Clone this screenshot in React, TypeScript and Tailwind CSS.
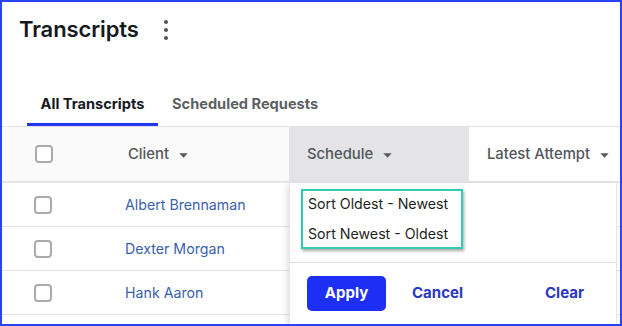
import React from 'react';

const rows = ['Albert Brennaman', 'Dexter Morgan', 'Hank Aaron', ''];

function Caret() {
  return (
    <svg width="9" height="5" viewBox="0 0 9 5" className="ml-[10px] mt-[2px]">
      <path d="M0.3 0.3h8.4L4.5 4.8z" fill="#555a60" />
    </svg>
  );
}

function Checkbox() {
  return <div className="w-[18px] h-[18px] rounded-[4px] border-2 border-[#ababab] bg-white" />;
}

export default function App() {
  return (
    <div
      className="w-[622px] h-[326px] border-2 border-[#2b44f2] bg-white relative overflow-hidden"
      style={{ fontFamily: 'Inter, "Noto Sans", sans-serif' }}
    >
      <div className="flex items-center pl-[17px] pb-[2px] h-[56px]">
        <h1 className="text-[22px] font-semibold text-[#15191e] tracking-[-0.1px]">Transcripts</h1>
        <div className="ml-[25px] flex flex-col gap-[4px] mt-[1px]">
          <span className="w-[4px] h-[4px] rounded-full bg-[#505358]" />
          <span className="w-[4px] h-[4px] rounded-full bg-[#505358]" />
          <span className="w-[4px] h-[4px] rounded-full bg-[#505358]" />
        </div>
      </div>

      <div className="flex mt-[22px] pl-[25px] border-b border-[#e3e3e3] text-[14.6px] font-bold">
        <div className="w-[131px] h-[46px] flex items-center justify-center text-[#15191e] border-b-[3px] border-[#2236f0] pt-[7px]">
          All Transcripts
        </div>
        <div className="h-[46px] flex items-center pl-[14px] pt-[4px] text-[#5c5f64]">Scheduled Requests</div>
      </div>

      <div className="flex h-[56px] bg-[#fafafa] border-b-2 border-[#e5e5e5] text-[14.8px] font-medium text-[#52565b]">
        <div className="w-[99px] flex items-center pl-[33px]">
          <Checkbox />
        </div>
        <div className="w-[188px] flex items-center pl-[27px]">
          Client
          <Caret />
        </div>
        <div className="w-[180px] flex items-center pl-[18px] bg-[#e4e4e6]">
          Schedule
          <Caret />
        </div>
        <div className="flex-1 flex items-center pl-[18px] bg-white">
          Latest Attempt
          <Caret />
        </div>
      </div>

      {rows.map((name, i) => (
        <div key={i} className="flex h-[44px] border-b border-[#e3e3e3] text-[14.2px] text-[#3a5fae]">
          <div className="w-[99px] flex items-center pl-[32px]">
            {name && <Checkbox />}
          </div>
          <div className="flex items-center pl-[24px]">{name}</div>
        </div>
      ))}

      <div className="absolute left-[287px] top-[181px] w-[328px] h-[160px] bg-white border-l border-r border-[#e6e6e6] shadow-[-2px_2px_6px_rgba(0,0,0,0.12)]">
        <div className="pt-[6px] pl-[11px] h-[80px] border-b border-[#e0e0e0]">
          <div className="w-[162px] h-[60px] border-2 border-[#31cbb4] shadow-[1px_2px_3px_rgba(0,0,0,0.35)] text-[14.2px] text-[#1d1f22] flex flex-col">
            <div className="pl-[5px] h-[26px] shrink-0 flex items-center">Sort Oldest - Newest</div>
            <div className="pl-[5px] h-[33px] shrink-0 flex items-center">Sort Newest - Oldest</div>
          </div>
        </div>
        <div className="flex items-center pl-[17px] pt-[13px] text-[15px] font-bold">
          <button className="w-[79px] h-[35px] rounded-[5px] bg-[#1e2ff5] text-white">Apply</button>
          <button className="ml-[26px] text-[#2a38c6]">Cancel</button>
          <button className="ml-[82px] text-[#2a38c6]">Clear</button>
        </div>
      </div>
    </div>
  );
}
